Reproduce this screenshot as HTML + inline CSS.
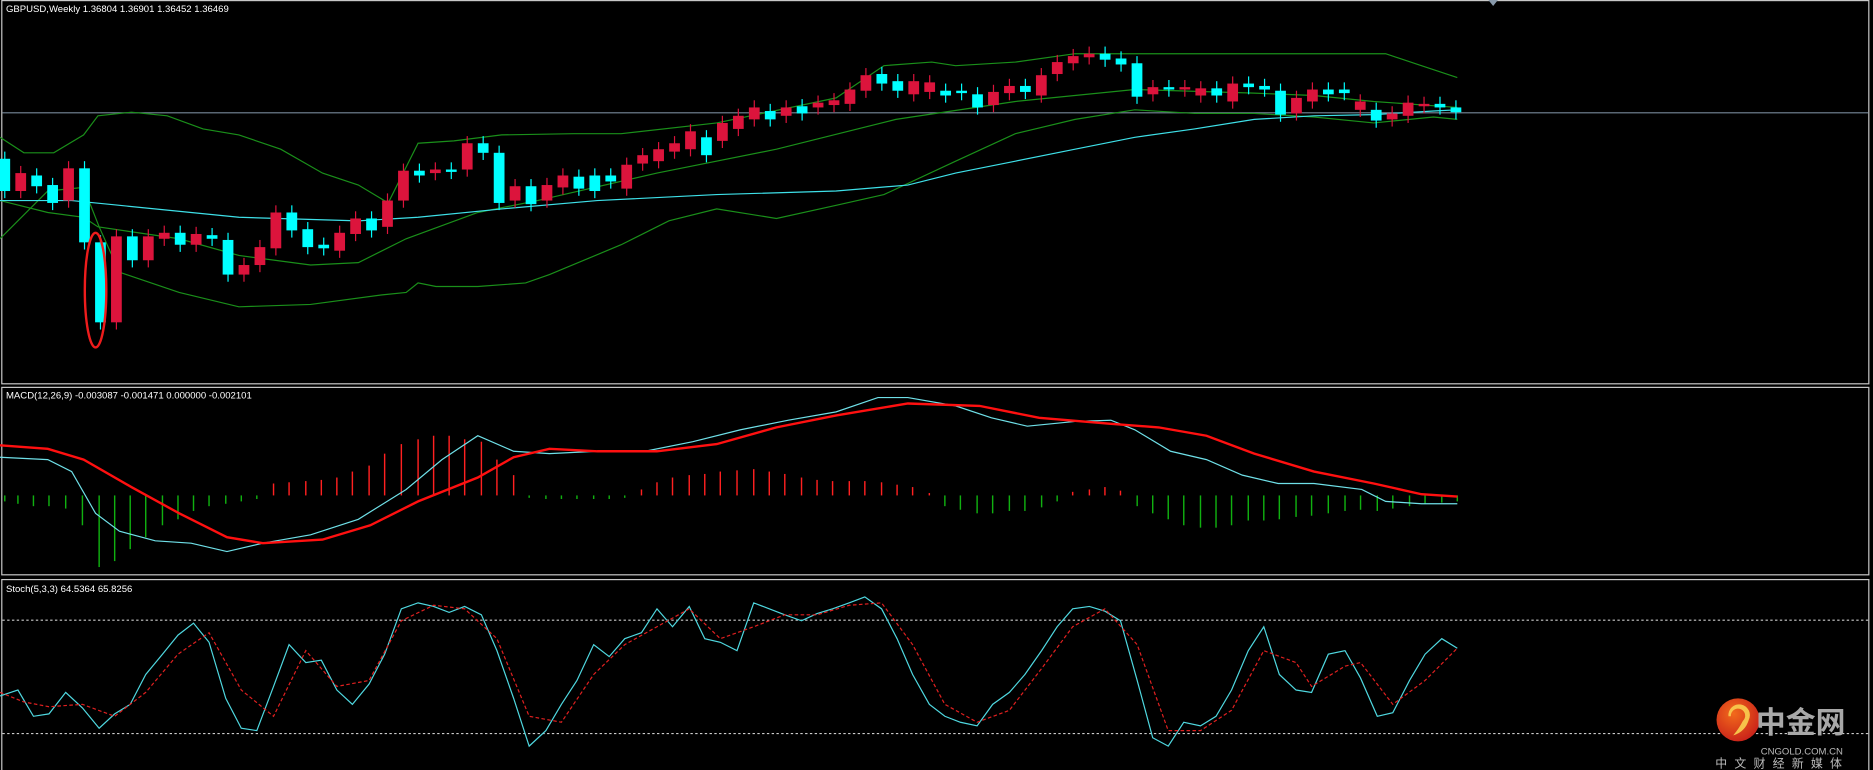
<!DOCTYPE html>
<html><head><meta charset="utf-8"><style>
html,body{margin:0;padding:0;background:#000;overflow:hidden}
svg{display:block}
text{font-family:"Liberation Sans","Noto Sans CJK SC",sans-serif}
</style></head><body>
<svg id="s" width="1873" height="770" viewBox="0 0 1568 645" preserveAspectRatio="none" xmlns="http://www.w3.org/2000/svg">
<rect width="1568" height="645" fill="#000"/>
<g fill="none" stroke="#c8c8c8" stroke-width="1">
<rect x="1.5" y="0.5" width="1563" height="321"/>
<rect x="1.5" y="324.5" width="1563" height="157"/>
<rect x="1.5" y="485.5" width="1563" height="160"/>
</g>
<polygon points="1246,0 1254,0 1250,5" fill="#8899aa"/>
<line x1="2" y1="94.5" x2="1564" y2="94.5" stroke="#778899" stroke-width="1"/>
<g id="bb" fill="none" stroke="#1a8f1a" stroke-width="1">
<polyline points="0,115 20,128 45,128 70,113 82,97 110,94 140,97 170,108 200,113 235,125 270,145 300,155 325,170 350,120 380,118 420,113 480,112 520,112 600,103 700,82 740,55 780,52 800,55 850,52 900,45 960,45 1100,45 1160,45 1190,55 1220,65"/>
<polyline points="0,168 40,178 70,182 82,190 150,200 200,214 260,222 300,220 340,200 400,178 450,168 550,145 650,125 750,100 850,85 950,75 1050,78 1100,80 1150,85 1220,90"/>
<polyline points="0,200 40,160 70,157 83,190 100,228 150,245 200,257 260,255 320,247 340,245 350,237 365,240 400,240 440,237 460,230 520,205 560,185 600,175 650,183 700,172 740,163 800,135 850,112 900,100 950,92 1000,95 1050,95 1100,98 1150,103 1200,98 1220,100"/>
</g>
<polyline fill="none" stroke="#3ee0e8" stroke-width="1" points="0,168 60,168 100,172 200,182 300,185 350,182 420,175 500,168 600,163 700,160 760,155 800,145 850,135 900,125 950,115 1000,108 1050,100 1100,97 1150,96 1200,93 1220,92"/>
<g id="cd"></g>
<ellipse cx="80" cy="243" rx="9" ry="48" fill="none" stroke="#ee1c1c" stroke-width="2"/>
<text x="5" y="10" font-size="8" fill="#fff">GBPUSD,Weekly  1.36804 1.36901 1.36452 1.36469</text>
<text x="5" y="334" font-size="8" fill="#fff">MACD(12,26,9) -0.003087 -0.001471 0.000000 -0.002101</text>
<text x="5" y="496" font-size="8" fill="#fff">Stoch(5,3,3) 64.5364 65.8256</text>
<g id="hist"></g>
<polyline fill="none" stroke="#6fe0e8" stroke-width="1" points="0,383 40,385 60,395 80,430 100,445 130,453 160,455 190,462 220,455 260,448 300,435 340,410 370,385 400,365 430,378 460,380 500,378 540,378 580,370 620,360 660,352 700,345 735,333 760,333 800,340 830,350 860,357 900,353 930,352 950,360 980,378 1010,385 1040,398 1070,405 1100,405 1140,410 1160,420 1190,422 1220,422"/>
<polyline fill="none" stroke="#ff1010" stroke-width="2" points="0,373 40,376 70,385 110,408 150,430 190,450 220,455 270,452 310,440 350,420 400,400 430,383 460,376 500,378 550,378 600,372 650,358 700,348 760,338 820,340 870,350 930,355 970,358 1010,365 1050,380 1100,395 1150,405 1190,414 1220,416"/>
<line x1="2" y1="519.5" x2="1564" y2="519.5" stroke="#ccc" stroke-dasharray="2,2"/>
<line x1="2" y1="614.5" x2="1564" y2="614.5" stroke="#ccc" stroke-dasharray="2,2"/>
<polyline fill="none" stroke="#4fd8e0" stroke-width="1" points="0,583 15,578 28,600 41,598 55,580 69,593 83,610 96,598 109,590 122,565 136,548 149,532 162,522 175,538 189,585 202,610 215,612 229,575 242,540 256,555 269,553 282,578 295,590 309,573 322,548 336,510 350,505 363,508 376,513 389,508 403,515 416,545 430,585 443,625 457,612 470,590 483,570 497,540 510,550 523,535 537,530 550,510 563,525 577,508 590,535 603,538 617,545 631,505 644,510 657,515 671,520 684,514 697,510 711,505 724,500 738,510 751,535 764,565 778,590 791,600 804,605 818,608 831,590 845,580 858,565 872,545 885,525 898,510 912,508 925,512 938,520 952,570 965,618 978,625 991,605 1005,608 1018,600 1031,578 1045,545 1058,525 1071,565 1085,578 1098,580 1112,548 1126,545 1139,568 1153,600 1166,597 1180,570 1193,548 1207,535 1220,543"/>
<polyline fill="none" stroke="#e02020" stroke-width="1" stroke-dasharray="3,2" points="0,580 20,588 41,592 69,590 96,600 122,580 149,548 175,530 202,578 229,600 256,545 282,575 309,570 336,520 363,507 389,510 416,535 443,600 470,605 497,565 523,540 550,525 577,510 603,535 631,525 657,515 684,515 711,507 738,505 764,540 791,590 818,605 845,595 872,560 898,525 925,510 952,540 978,612 1005,612 1031,595 1058,545 1085,555 1098,575 1126,558 1139,555 1166,590 1193,570 1220,543"/>
<defs><radialGradient id="lg" cx="0.4" cy="0.35" r="0.7"><stop offset="0" stop-color="#f26a1b"/><stop offset="1" stop-color="#c8201a"/></radialGradient></defs>
<circle cx="1455" cy="603" r="18" fill="url(#lg)"/>
<path d="M1449,600 a6,6 0 1 1 10,4 q-3,6 -8,12 q10,-3 13,-13 a9,9 0 1 0 -17,-3 z" fill="#f7c24a"/>
<text x="1470" y="614" font-size="25" font-weight="bold" fill="#a8a8a8" font-family="Noto Sans CJK SC,sans-serif">中金网</text>
<text x="1474" y="632" font-size="8" fill="#bbb">CNGOLD.COM.CN</text>
<text x="1436" y="643" font-size="10" fill="#bbb" letter-spacing="6" font-family="Noto Sans CJK SC,sans-serif">中文财经新媒体</text>
</svg>
<script>
var C=[['c',133,160],['r',145,160],['c',147,156],['c',155,170],['r',141,168],['c',141,203],['c',203,270],['r',198,270],['c',198,218],['r',198,218],['r',195,200],['c',195,205],['r',196,205],['c',197,200],['c',201,230],['r',222,230],['r',207,222],['r',178,208],['c',178,193],['c',192,207],['c',205,208],['r',195,210],['r',183,196],['c',183,193],['r',168,190],['r',143,168],['c',143,147],['r',142,145],['c',142,144],['r',120,142],['c',120,128],['c',128,170],['r',156,168],['c',156,171],['r',155,168],['r',147,157],['c',148,158],['c',147,160],['c',147,152],['r',138,158],['r',130,137],['r',125,135],['r',120,127],['r',110,125],['c',115,130],['r',103,118],['r',97,108],['r',90,100],['c',93,100],['r',90,97],['c',89,95],['r',86,90],['r',84,88],['r',75,87],['r',63,76],['c',62,70],['c',68,76],['r',68,79],['r',69,77],['c',76,80],['c',76,78],['c',79,90],['r',77,88],['r',72,78],['c',72,77],['r',63,80],['r',52,62],['r',47,53],['r',45,48],['c',45,50],['c',49,54],['c',53,81],['r',73,79],['c',73,75],['r',73,75],['r',74,80],['c',74,80],['r',70,85],['c',70,73],['c',72,75],['c',76,96],['r',82,95],['r',75,85],['c',75,79],['c',75,78],['r',85,92],['c',92,101],['r',95,100],['r',86,97],['r',87,89],['c',87,90],['c',90,94]];
var ns='http://www.w3.org/2000/svg',g=document.getElementById('cd'),s='';
C.forEach(function(d,i){var x=4+13.35*i,col=d[0]=='c'?'#00ffff':'#dc143c';var t=d[1],b=Math.max(d[2],t+2);
s+='<line x1="'+x+'" x2="'+x+'" y1="'+(t-6)+'" y2="'+(b+6)+'" stroke="'+col+'"/><rect x="'+(x-4.5)+'" y="'+t+'" width="9" height="'+(b-t)+'" fill="'+col+'"/>';});
g.innerHTML=s;
var H=[[4,420],[15,422],[28,424],[41,424],[55,426],[69,440],[83,475],[96,470],[109,460],[122,450],[136,440],[149,435],[162,428],[175,424],[189,422],[202,420],[215,418],[229,405],[242,404],[256,403],[269,402],[282,400],[295,395],[309,390],[322,380],[336,372],[350,368],[363,365],[376,365],[389,368],[403,370],[416,385],[430,398],[443,417],[457,418],[470,418],[483,418],[497,418],[510,418],[523,417],[537,410],[550,404],[563,400],[577,398],[590,397],[603,395],[617,394],[631,393],[644,395],[657,397],[671,400],[684,402],[697,403],[711,403],[724,403],[738,404],[751,406],[764,408],[778,413],[791,424],[804,427],[818,430],[831,430],[845,428],[858,428],[872,425],[885,420],[898,412],[912,410],[925,408],[938,411],[952,424],[965,430],[978,435],[991,440],[1005,442],[1018,442],[1031,440],[1045,436],[1058,436],[1071,435],[1085,433],[1098,432],[1112,430],[1126,428],[1139,427],[1153,428],[1166,426],[1180,424],[1193,422],[1207,421],[1220,420]];
var z=415,h='';H.forEach(function(d){var col=d[1]<z?'#ff2020':'#10b010';h+='<line x1="'+d[0]+'" x2="'+d[0]+'" y1="'+z+'" y2="'+d[1]+'" stroke="'+col+'" stroke-width="1.2"/>';});
document.getElementById('hist').innerHTML=h;
</script>
</body></html>
